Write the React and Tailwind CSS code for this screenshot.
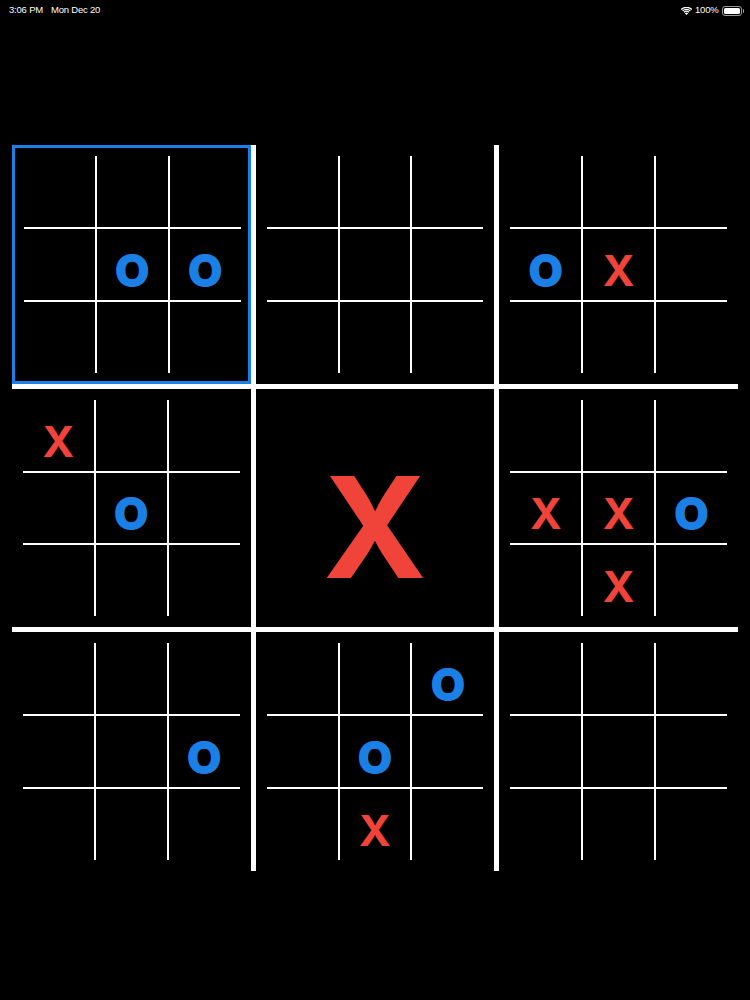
import React from "react";

const boards = [
  ["", "", "", "", "O", "O", "", "", ""],
  ["", "", "", "", "", "", "", "", ""],
  ["", "", "", "O", "X", "", "", "", ""],
  ["X", "", "", "", "O", "", "", "", ""],
  null,
  ["", "", "", "X", "X", "O", "", "X", ""],
  ["", "", "", "", "", "O", "", "", ""],
  ["", "", "O", "", "O", "", "", "X", ""],
  ["", "", "", "", "", "", "", "", ""],
];

function Mark({ v }) {
  if (v === "O")
    return (
      <span
        className="translate-y-[6px] text-[45px] leading-none font-black text-[#1a80e5]"
        style={{ fontFamily: "Inter, 'Liberation Sans', sans-serif" }}
      >
        O
      </span>
    );
  if (v === "X")
    return (
      <span
        className="translate-y-[6px] text-[43px] leading-none font-bold text-[#f0443a]"
        style={{ fontFamily: "Inter, 'Liberation Sans', sans-serif" }}
      >
        X
      </span>
    );
  return null;
}

function SmallBoard({ cells }) {
  return (
    <div className="grid h-full w-full grid-cols-3 grid-rows-3 gap-[2px] bg-white">
      {cells.map((v, i) => (
        <div key={i} className="flex items-center justify-center bg-black">
          <Mark v={v} />
        </div>
      ))}
    </div>
  );
}

function Wifi() {
  return (
    <svg width="11" height="8" viewBox="0 0 22 16" fill="white">
      <path d="M11 16 L7.6 12.4 A5 5 0 0 1 14.4 12.4 Z" />
      <path d="M5 9.6 A8.8 8.8 0 0 1 17 9.6 L15.3 11.4 A6.4 6.4 0 0 0 6.7 11.4 Z" />
      <path d="M2.3 6.8 A12.6 12.6 0 0 1 19.7 6.8 L18 8.6 A10.2 10.2 0 0 0 4 8.6 Z" />
      <path d="M-0.4 4 A16.4 16.4 0 0 1 22.4 4 L20.7 5.8 A14 14 0 0 0 1.3 5.8 Z" />
    </svg>
  );
}

function Battery() {
  return (
    <div className="flex items-center">
      <div className="flex h-[10px] w-[20px] items-center rounded-[3px] border border-white/60 p-[1px]">
        <div className="h-full w-full rounded-[1.5px] bg-white" />
      </div>
      <div className="ml-[1px] h-[4px] w-[1.5px] rounded-r-sm bg-white/60" />
    </div>
  );
}

export default function App() {
  return (
    <div
      className="flex h-[1000px] w-[750px] flex-col bg-black text-white"
      style={{ fontFamily: "'Liberation Sans', Arial, sans-serif" }}
    >
      <div className="flex h-[20px] items-center justify-between pl-[9px] pr-[6px] pt-[1px] text-[9.5px] tracking-[-0.2px]">
        <div className="flex gap-[8px]">
          <span>3:06 PM</span>
          <span>Mon Dec 20</span>
        </div>
        <div className="flex items-center gap-[3px]">
          <Wifi />
          <span>100%</span>
          <Battery />
        </div>
      </div>
      <div className="ml-[12px] mt-[125px] grid h-[726px] w-[726px] grid-cols-3 grid-rows-3 gap-[5px] bg-white">
        {boards.map((b, i) => {
          if (b === null)
            return (
              <div key={i} className="flex items-center justify-center bg-black">
                <span
                  className="translate-y-[19px] text-[140px] leading-none font-bold text-[#f0443a]"
                  style={{ fontFamily: "Inter, 'Liberation Sans', sans-serif" }}
                >
                  X
                </span>
              </div>
            );
          if (i === 0)
            return (
              <div key={i} className="border-[3px] border-[#1a80e5] bg-black pb-[8px] pl-[9px] pr-[7px] pt-[8px]">
                <SmallBoard cells={b} />
              </div>
            );
          return (
            <div key={i} className="bg-black p-[11px]">
              <SmallBoard cells={b} />
            </div>
          );
        })}
      </div>
    </div>
  );
}
